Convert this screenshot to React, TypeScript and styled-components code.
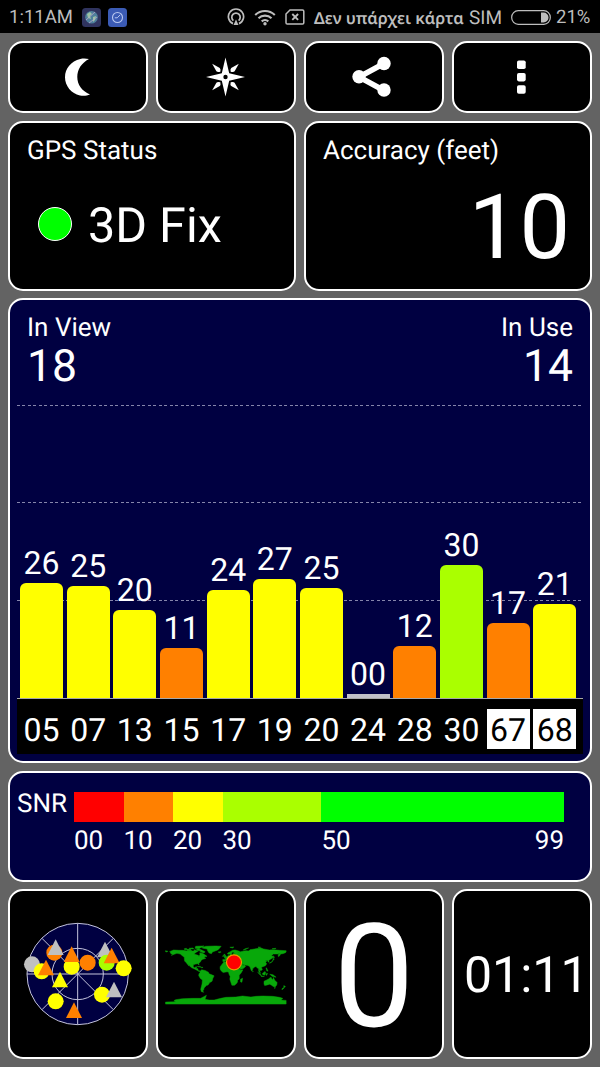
import React from "react";
import styled, { createGlobalStyle } from "styled-components";

const GlobalStyle = createGlobalStyle`
  * { box-sizing: border-box; }
  body { margin: 0; background: #636363; }
  svg { flex-shrink: 0; }
`;

const Screen = styled.div`
  width: 600px;
  height: 1067px;
  overflow: hidden;
  background: #636363;
  color: #fff;
  font-family: Roboto, "Noto Sans", sans-serif;
  line-height: 1;
  text-rendering: geometricPrecision;
`;

const StatusBar = styled.header`
  display: flex;
  align-items: center;
  height: 33px;
  padding: 1px 10px 0 9px;
  background: #000;
  color: #bdbdbd;
  font-size: 18px;
  white-space: nowrap;
`;

const Clock = styled.span`
  width: 73px;
  font-size: 18.5px;
`;

const AppIcons = styled.div`
  display: flex;
  gap: 7px;
`;

const Signals = styled.div`
  display: flex;
  align-items: center;
  gap: 9px;
  margin-left: auto;
`;

const Carrier = styled.span`
  width: 188px;
  display: flex;
  align-items: baseline;
  justify-content: space-between;
  font-size: 19px;
`;

const CarrierGreek = styled.span`
  font-family: "Noto Sans", sans-serif;
  font-weight: 600;
  font-size: 16.3px;
`;

const Battery = styled.span`
  display: flex;
  align-items: center;
  gap: 5px;
  width: 79px;
  font-size: 18.5px;
`;

const Row = styled.div<{ $height: number; $gap?: number }>`
  display: grid;
  grid-auto-flow: column;
  grid-auto-columns: minmax(0, 1fr);
  gap: 8px;
  height: ${(p) => p.$height}px;
  margin: ${(p) => p.$gap ?? 8}px 8px 0;
`;

const Card = styled.section<{ $navy?: boolean }>`
  min-width: 0;
  overflow: hidden;
  border: 2px solid #fff;
  border-radius: 15px;
  background: ${(p) => (p.$navy ? "#000041" : "#000")};
`;

const IconButton = styled(Card).attrs({ as: "button" })<{ $nudge?: number }>`
  display: flex;
  align-items: center;
  justify-content: center;
  padding: 0 ${(p) => p.$nudge ?? 0}px 0 0;
  color: #fff;
`;

const StatCard = styled(Card)`
  padding: 15px 17px 0;
`;

const CenterCard = styled(Card)`
  display: flex;
  align-items: center;
  justify-content: center;
`;

const Label = styled.div`
  font-size: 26px;
  white-space: nowrap;
`;

const FixLine = styled.div`
  display: flex;
  align-items: center;
  gap: 16px;
  height: 48px;
  margin: 36px 0 0 11px;
  font-size: 48.5px;
`;

const FixText = styled.span`
  padding-top: 5px;
`;

const FixDot = styled.span`
  width: 34px;
  height: 34px;
  border: 1.5px solid #fff;
  border-radius: 50%;
  background: #0f0;
`;

const AccuracyValue = styled.div`
  margin-top: 19px;
  padding-right: 3px;
  font-size: 90px;
  text-align: right;
`;

const ChartCard = styled(Card)`
  padding: 0 7px;
`;

const Counts = styled.div`
  display: flex;
  justify-content: space-between;
  height: 100px;
  padding: 15px 10px 0 10px;
`;

const Count = styled.div<{ $right?: boolean }>`
  text-align: ${(p) => (p.$right ? "right" : "left")};
`;

const CountValue = styled.div`
  margin-top: 3px;
  font-size: 44.5px;
`;

const dashes =
  "repeating-linear-gradient(90deg, #8585ab 0 3px, transparent 3px 5.45px)";

const Plot = styled.div`
  display: flex;
  align-items: flex-end;
  gap: 3.67px;
  width: 566px;
  height: 299px;
  padding-left: 3px;
  border-bottom: 1px solid #a8a8a8;
  background-image: ${dashes}, ${dashes}, ${dashes};
  background-size: 565px 1px;
  background-position: 0 5px, 0 102px, 0 200px;
  background-repeat: no-repeat;
`;

const BarColumn = styled.div`
  width: 43px;
  text-align: center;
  font-size: 32px;
  white-space: nowrap;
`;

const Bar = styled.div<{ $h: number; $color: string }>`
  height: ${(p) => p.$h}px;
  margin-top: 4px;
  border-radius: ${(p) => (p.$h > 6 ? "6px 6px 0 0" : "0")};
  background: ${(p) => p.$color};
`;

const Axis = styled.div`
  display: flex;
  align-items: center;
  gap: 3.67px;
  width: 566px;
  height: 55px;
  padding: 5px 0 0 3px;
  background: #000;
`;

const SatId = styled.div<{ $inverted: boolean }>`
  width: 43px;
  height: 40px;
  padding-top: 5px;
  text-align: center;
  font-size: 32px;
  color: ${(p) => (p.$inverted ? "#000" : "#fff")};
  background: ${(p) => (p.$inverted ? "#fff" : "transparent")};
`;

const ScaleCard = styled(Card)`
  display: flex;
  align-items: flex-start;
  padding: 18px 26px 0 7px;
  font-size: 26px;
`;

const ScaleTitle = styled.div`
  width: 57px;
`;

const Scale = styled.div`
  display: flex;
  flex: 1;
  padding-top: 1px;
`;

const Segment = styled.div<{ $span: number }>`
  display: flex;
  flex-wrap: wrap;
  justify-content: space-between;
  align-content: flex-start;
  flex: ${(p) => p.$span} 1 0;
  min-width: 0;
`;

const Swatch = styled.div<{ $color: string }>`
  width: 100%;
  height: 30px;
  margin-bottom: 6px;
  background: ${(p) => p.$color};
`;

const Speed = styled.span`
  padding-top: 7px;
  font-size: 144px;
`;

const TimeCard = styled(Card)`
  display: flex;
  align-items: center;
  padding: 4px 0 0 10px;
  font-size: 50px;
`;

const YELLOW = "#ffff00";
const ORANGE = "#ff8000";
const LIME = "#aaff00";
const GREY = "#c0c0c8";

const satellites = [
  { id: "05", snr: "26", h: 115, color: YELLOW },
  { id: "07", snr: "25", h: 112, color: YELLOW },
  { id: "13", snr: "20", h: 88, color: YELLOW },
  { id: "15", snr: "11", h: 50, color: ORANGE },
  { id: "17", snr: "24", h: 108, color: YELLOW },
  { id: "19", snr: "27", h: 119, color: YELLOW },
  { id: "20", snr: "25", h: 110, color: YELLOW },
  { id: "24", snr: "00", h: 4, color: GREY },
  { id: "28", snr: "12", h: 52, color: ORANGE },
  { id: "30", snr: "30", h: 133, color: LIME },
  { id: "67", snr: "17", h: 75, color: ORANGE },
  { id: "68", snr: "21", h: 94, color: YELLOW },
];

const scale = [
  { from: "00", span: 10, color: "#ff0000" },
  { from: "10", span: 10, color: ORANGE },
  { from: "20", span: 10, color: YELLOW },
  { from: "30", span: 20, color: LIME },
  { from: "50", to: "99", span: 49, color: "#00ff00" },
];

const GlobeAppIcon = () => (
  <svg width="19" height="19" viewBox="0 0 19 19">
    <rect width="19" height="19" rx="3.5" fill="#30345f" />
    <circle cx="9.5" cy="9.3" r="6.3" fill="#4f7f9c" />
    <path d="M5 6l3-2 2 2-2 2 1 3-3-1zM11 9l3-1-1 4-2 2z" fill="#9cc4a4" />
    <path d="M4 12l9-8M7 15l8-6" stroke="#b9a6c9" strokeWidth=".8" />
  </svg>
);

const CompassAppIcon = () => (
  <svg width="19" height="19" viewBox="0 0 19 19" fill="none">
    <rect width="19" height="19" rx="3.5" fill="#3b5bb5" />
    <circle cx="9.5" cy="9.5" r="5" stroke="#b9c8f0" strokeWidth="1.1" />
    <path d="M6.8 9.8h2.4l3-3" stroke="#b9c8f0" strokeWidth="1" />
  </svg>
);

const HotspotIcon = () => (
  <svg width="18" height="18" viewBox="0 0 18 18" fill="none" stroke="#bdbdbd" strokeWidth="1.7">
    <path d="M6 15.6A7.6 7.6 0 1 1 12 15.6" />
    <path d="M6.4 12.6A4.2 4.2 0 1 1 11.6 12.6" />
    <path d="M9 11.5l2.5 5.5h-5z" fill="#bdbdbd" stroke="none" />
  </svg>
);

const WifiIcon = () => (
  <svg width="22" height="17" viewBox="0 0 22 17" fill="none" stroke="#bdbdbd" strokeWidth="2.1">
    <path d="M1.2 6A14 14 0 0 1 20.8 6" />
    <path d="M4.5 9.3A9.3 9.3 0 0 1 17.5 9.3" />
    <path d="M7.7 12.4A4.9 4.9 0 0 1 14.3 12.4" />
    <circle cx="11" cy="14.8" r="1.7" fill="#bdbdbd" stroke="none" />
  </svg>
);

const NoSimIcon = () => (
  <svg width="20" height="16" viewBox="0 0 20 16" fill="none" stroke="#bdbdbd" strokeWidth="1.5">
    <path d="M5 1h12.5a1.3 1.3 0 0 1 1.3 1.3v11.4a1.3 1.3 0 0 1-1.3 1.3H2.3A1.3 1.3 0 0 1 1 13.7V5z" />
    <path d="M7.3 5l5.8 5.8M13.1 5l-5.8 5.8" strokeWidth="1.9" />
  </svg>
);

const BatteryIcon = () => (
  <svg width="40" height="15" viewBox="0 0 40 15">
    <rect x=".7" y=".7" width="38.6" height="13.6" rx="6.5" fill="none" stroke="#bdbdbd" strokeWidth="1.2" />
    <path d="M30 2.5h2.5a5 5 0 0 1 0 10H30z" fill="#bdbdbd" />
  </svg>
);

const MoonIcon = () => (
  <svg width="26" height="38" viewBox="0 0 26 38">
    <path d="M25 1.1C22 .4 19 .3 16.3 1 7 3.3 1 10.5 1 19.2S7.3 35.6 16 37.4c3.3.7 7 .3 10-.9C17.8 33 13.3 26.5 13.3 19S17.5 5 25 1.1z" fill="#fff" />
  </svg>
);

const CompassRose = () => (
  <svg width="40" height="40" viewBox="-19.5 -20 40 40" fill="#fff">
    <path d="M0-19.5L3.7-3.7 19.5 0 3.7 3.7 0 19.5-3.7 3.7-19.5 0-3.7-3.7z" />
    {[45, 135, 225, 315].map((a) => (
      <path key={a} transform={`rotate(${a})`} d="M0-18.8L2.4-10.5Q2.6-9 0-7.3Q-2.6-9-2.4-10.5z" />
    ))}
    <circle r="2.2" fill="#000" />
  </svg>
);

const ShareIcon = () => (
  <svg width="40" height="42" viewBox="0 0 40 42">
    <path d="M32 7.5L7 21l25 13.5" fill="none" stroke="#fff" strokeWidth="5.4" />
    <circle cx="32" cy="7.5" r="6.7" fill="#fff" />
    <circle cx="7" cy="20.8" r="6.7" fill="#fff" />
    <circle cx="32" cy="34" r="6.7" fill="#fff" />
  </svg>
);

const MoreIcon = () => (
  <svg width="9" height="34" viewBox="0 0 9 34" fill="#fff">
    <rect y=".5" width="8.7" height="8.5" rx="1.8" />
    <rect y="12.9" width="8.7" height="8.5" rx="1.8" />
    <rect y="25.3" width="8.7" height="8.5" rx="1.8" />
  </svg>
);

const skyDots: [string, number, number, string][] = [
  ["c", 118, 128, ORANGE],
  ["t", 122, 112, "#c0c0c0"],
  ["c", 51, 163, "#c0c0c0"],
  ["c", 80, 184, YELLOW],
  ["t", 93, 173, ORANGE],
  ["c", 170, 170, YELLOW],
  ["t", 170, 133, ORANGE],
  ["c", 218, 158, ORANGE],
  ["t", 135, 209, YELLOW],
  ["t", 270, 119, "#c0c0c0"],
  ["c", 275, 158, LIME],
  ["t", 290, 137, ORANGE],
  ["c", 326, 175, YELLOW],
  ["c", 122, 274, YELLOW],
  ["c", 261, 254, YELLOW],
  ["t", 297, 239, "#c0c0c0"],
  ["t", 177, 301, ORANGE],
];

const SkyView = () => (
  <svg width="130" height="130" viewBox="-6 -3 390 390">
    <g fill="none" stroke="#c4c4dc" strokeWidth="3">
      <circle cx="188" cy="192" r="152" fill="#000041" />
      <circle cx="188" cy="192" r="77" />
      <path d="M188 40v304M36 192h304M81 85l214 214M295 85L81 299" />
    </g>
    {skyDots.map(([kind, x, y, color], i) =>
      kind === "c" ? (
        <circle key={i} cx={x} cy={y} r="24" fill={color} />
      ) : (
        <path key={i} d={`M${x} ${y - 24}l24 47h-48z`} fill={color} />
      )
    )}
  </svg>
);

/* Coast outlines as longitude/latitude pairs. */
const land = [
  "-168,66 -156,71 -140,70 -128,70 -115,68 -105,68 -95,68 -94,72 -86,69 -82,68 -86,66 -94,60 -93,58 -82,55 -80,51 -79,55 -77,58 -78,62 -70,61 -65,58 -60,55 -56,52 -65,50 -60,46 -66,44 -70,43 -74,40 -76,35 -81,31 -80,26 -82,28 -84,30 -90,29 -97,27 -97,21 -94,18 -91,19 -90,21 -87,21 -88,16 -83,15 -83,10 -79,9 -77,8 -80,7 -85,10 -92,14 -100,17 -105,20 -109,25 -113,30 -112,28 -110,23 -115,29 -118,33 -123,38 -124,46 -124,49 -130,54 -136,59 -146,61 -152,59 -163,55 -157,58 -164,60 -165,63",
  "-180,69 -173,67 -176,65 -180,66",
  "-88,73 -80,74 -72,71 -62,66 -65,62 -72,64 -78,65 -73,68 -85,70",
  "-117,73 -105,73 -102,69 -115,69",
  "-124,75 -118,76 -116,73 -123,72",
  "-110,76 -98,77 -96,74 -108,75",
  "-90,82 -65,83 -75,78 -80,75 -92,76",
  "-72,78 -60,82 -30,83 -14,82 -20,75 -24,71 -32,68 -40,65 -43,60 -50,62 -54,68 -56,74 -68,76",
  "-77,8 -72,12 -62,10 -52,5 -50,0 -44,-2 -35,-6 -39,-14 -41,-22 -48,-26 -53,-33 -58,-35 -62,-39 -65,-42 -66,-47 -69,-51 -66,-55 -73,-53 -75,-46 -73,-38 -71,-30 -70,-18 -76,-14 -81,-5 -80,0 -77,4",
  "-6,35 10,37 11,33 20,31 32,31 35,27 38,18 43,11 51,12 46,3 40,-4 40,-15 35,-20 35,-24 32,-29 26,-34 18,-34 14,-22 12,-16 13,-8 9,0 9,4 4,6 -8,4 -13,8 -17,14 -17,21 -10,30",
  "-9,37 -9,43 -2,43 -1,46 -5,48 2,51 8,54 8,57 11,54 20,55 22,58 29,60 22,60 25,65 20,64 17,61 19,60 16,57 13,56 11,59 5,59 6,62 13,66 20,70 28,71 41,67 40,64 34,66 38,64 44,66 54,68 60,69 68,68 72,72 80,73 98,76 105,77 113,74 130,71 140,72 160,70 180,69 180,65 178,63 170,60 163,59 162,55 157,51 156,57 163,61 155,59 142,59 136,54 141,52 140,47 132,43 128,39 129,35 126,35 125,40 118,39 122,37 119,34 122,30 118,24 110,21 106,19 109,13 105,9 100,13 103,3 103,1 98,8 98,15 94,17 90,22 86,20 80,15 80,12 77,8 73,17 72,21 66,25 57,26 51,28 48,30 51,25 56,26 59,22 52,16 44,13 39,20 35,28 36,36 27,37 26,40 33,42 41,41 37,45 38,47 33,46 28,43 28,41 24,40 22,37 19,42 13,45 18,40 16,38 10,44 3,43 -1,38 -6,36",
  "-5,50 1,51 0,54 -3,58 -6,58 -4,54",
  "-10,52 -6,52 -6,55 -9,54",
  "-23,65 -15,66 -14,65 -19,63",
  "52,71 58,75 68,77 66,76 57,72",
  "12,79 24,80 20,77",
  "96,80 104,79 98,78",
  "138,75 150,76 146,74",
  "130,32 136,35 141,41 145,44 141,45 140,38 135,33",
  "142,54 145,49 142,46",
  "95,5 104,-2 106,-6 101,-2",
  "109,1 117,7 119,4 116,-4 110,-2",
  "105,-6 115,-8 106,-8",
  "119,0 125,1 121,-5",
  "120,18 122,17 126,8 122,9 121,14",
  "131,-1 141,-3 150,-10 143,-9 138,-7 133,-3",
  "114,-22 122,-18 129,-15 132,-11 137,-12 136,-15 140,-17 142,-11 146,-19 153,-26 152,-33 147,-39 140,-37 137,-34 131,-31 124,-33 116,-35 114,-30",
  "145,-41 148,-41 146,-44",
  "173,-35 178,-38 175,-41 173,-39",
  "172,-41 174,-42 168,-47 167,-45",
  "44,-16 50,-13 48,-25 44,-24",
  "80,9 82,7 80,6",
  "-85,22 -78,22 -74,20 -78,20",
  "-73,20 -68,19 -73,18",
  "-180,-90 180,-90 180,-79 165,-78 170,-73 160,-70 140,-67 110,-66 90,-67 75,-69 50,-66 30,-69 0,-70 -15,-73 -35,-78 -50,-78 -62,-76 -58,-64 -66,-68 -75,-73 -100,-73 -130,-74 -150,-77 -155,-80 -150,-83 -180,-84",
];

const WorldMap = () => (
  <svg width="140" height="90" viewBox="3 -3 420 270">
    <g transform="translate(212.5 131.5) scale(1.005 -1.008)" fill="#08a80a" stroke="#08a80a" strokeWidth="1.4">
      {land.map((points, i) => (
        <polygon key={i} points={points} />
      ))}
    </g>
    <circle cx="237" cy="97" r="22.5" fill="#ff0000" stroke="#e8a000" strokeWidth="3.5" />
  </svg>
);

export default function App() {
  return (
    <Screen>
      <GlobalStyle />
      <StatusBar>
        <Clock>1:11AM</Clock>
        <AppIcons>
          <GlobeAppIcon />
          <CompassAppIcon />
        </AppIcons>
        <Signals>
          <HotspotIcon />
          <WifiIcon />
          <NoSimIcon />
          <Carrier>
            <CarrierGreek>Δεν υπάρχει κάρτα</CarrierGreek> SIM
          </Carrier>
          <Battery>
            <BatteryIcon />
            21%
          </Battery>
        </Signals>
      </StatusBar>

      <Row $height={72}>
        <IconButton $nudge={2}><MoonIcon /></IconButton>
        <IconButton><CompassRose /></IconButton>
        <IconButton $nudge={5}><ShareIcon /></IconButton>
        <IconButton $nudge={1}><MoreIcon /></IconButton>
      </Row>

      <Row $height={170}>
        <StatCard>
          <Label>GPS Status</Label>
          <FixLine>
            <FixDot />
            <FixText>3D Fix</FixText>
          </FixLine>
        </StatCard>
        <StatCard>
          <Label>Accuracy (feet)</Label>
          <AccuracyValue>10</AccuracyValue>
        </StatCard>
      </Row>

      <Row $height={465} $gap={7}>
        <ChartCard $navy>
          <Counts>
            <Count>
              <Label>In View</Label>
              <CountValue>18</CountValue>
            </Count>
            <Count $right>
              <Label>In Use</Label>
              <CountValue>14</CountValue>
            </Count>
          </Counts>
          <Plot>
            {satellites.map((s) => (
              <BarColumn key={s.id}>
                {s.snr}
                <Bar $h={s.h} $color={s.color} />
              </BarColumn>
            ))}
          </Plot>
          <Axis>
            {satellites.map((s) => (
              <SatId key={s.id} $inverted={Number(s.id) > 60}>
                {s.id}
              </SatId>
            ))}
          </Axis>
        </ChartCard>
      </Row>

      <Row $height={111}>
        <ScaleCard $navy>
          <ScaleTitle>SNR</ScaleTitle>
          <Scale>
            {scale.map((s) => (
              <Segment key={s.from} $span={s.span}>
                <Swatch $color={s.color} />
                <span>{s.from}</span>
                {s.to && <span>{s.to}</span>}
              </Segment>
            ))}
          </Scale>
        </ScaleCard>
      </Row>

      <Row $height={170} $gap={7}>
        <CenterCard><SkyView /></CenterCard>
        <CenterCard><WorldMap /></CenterCard>
        <CenterCard><Speed>0</Speed></CenterCard>
        <TimeCard>01:11</TimeCard>
      </Row>
    </Screen>
  );
}
